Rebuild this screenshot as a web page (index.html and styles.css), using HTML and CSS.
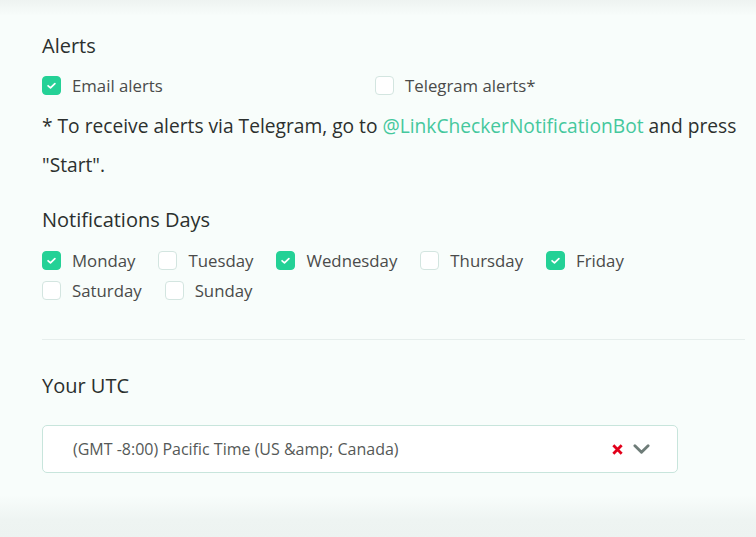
FILE: index.html
```html
<!DOCTYPE html>
<html lang="en">
<head>
<meta charset="utf-8">
<title>Notification settings</title>
<link rel="stylesheet" href="styles.css">
</head>
<body>
<main class="settings">
  <section class="group">
    <h2 class="title">Alerts</h2>
    <div class="alert-options">
      <label class="check"><span class="box on"><svg viewBox="0 0 20 20"><path d="M6 10.3l2.8 2.6 5.2-5.2"/></svg></span>Email alerts</label>
      <label class="check"><span class="box"></span>Telegram alerts*</label>
    </div>
    <p class="note"><span>* To receive alerts via Telegram, go to</span> <a class="link" href="#">@LinkCheckerNotificationBot</a> <span>and press</span> <span>"Start".</span></p>
  </section>

  <section class="group">
    <h2 class="title">Notifications Days</h2>
    <div class="days">
      <label class="check"><span class="box on"><svg viewBox="0 0 20 20"><path d="M6 10.3l2.8 2.6 5.2-5.2"/></svg></span>Monday</label>
      <label class="check"><span class="box"></span>Tuesday</label>
      <label class="check"><span class="box on"><svg viewBox="0 0 20 20"><path d="M6 10.3l2.8 2.6 5.2-5.2"/></svg></span>Wednesday</label>
      <label class="check"><span class="box"></span>Thursday</label>
      <label class="check"><span class="box on"><svg viewBox="0 0 20 20"><path d="M6 10.3l2.8 2.6 5.2-5.2"/></svg></span>Friday</label>
      <label class="check"><span class="box"></span>Saturday</label>
      <label class="check"><span class="box"></span>Sunday</label>
    </div>
  </section>

  <hr class="divider">

  <section class="group">
    <h2 class="title">Your UTC</h2>
    <div class="select">
      <span class="value">(GMT -8:00) Pacific Time (US &amp;amp; Canada)</span>
      <span class="controls">
        <svg class="clear" viewBox="0 0 14 14"><path d="M2.5 2.5l9 9M11.5 2.5l-9 9"/></svg>
        <svg class="arrow" viewBox="0 0 18 12"><path d="M2 2.5l7 7 7-7"/></svg>
      </span>
    </div>
  </section>
</main>
</body>
</html>
```

FILE: styles.css
```css
html, body {
  margin: 0;
  padding: 0;
}
body {
  width: 756px;
  height: 537px;
  overflow: hidden;
  font-family: "Open Sans", "Noto Sans", sans-serif;
  color: #2f3533;
  background:
    linear-gradient(to bottom, #eef3f1 0px, #f8fdfb 16px, #f8fdfb 495px, #eef4f2 520px, #edf3f1 537px);
}
.settings {
  padding: 34px 0 0 42px;
  width: 706px;
}
.title {
  margin: 0;
  font-size: 20px;
  line-height: 24px;
  font-weight: 400;
  color: #2b302e;
}
.alert-options {
  display: grid;
  grid-template-columns: 333px 1fr;
  margin-top: 17px;
}
.check {
  display: flex;
  align-items: center;
  gap: 11px;
  height: 20px;
  font-size: 16.8px;
  color: #4a4b4a;
  white-space: nowrap;
}
.box {
  width: 19px;
  height: 19px;
  box-sizing: border-box;
  border: 1.5px solid #d3e5e0;
  border-radius: 4px;
  background: #fff;
  display: flex;
  align-items: center;
  justify-content: center;
  flex: none;
}
.box.on {
  background: #24d196;
  border-color: #24d196;
}
.box svg {
  width: 19px;
  height: 19px;
  fill: none;
  stroke: #fff;
  stroke-width: 2;
  stroke-linecap: round;
  stroke-linejoin: round;
}
.note {
  margin: 11px 0 0;
  font-size: 19.2px;
  line-height: 39px;
  color: #2c302e;
  width: 706px;
}
.link {
  color: #45c89d;
  text-decoration: none;
}
.group + .group {
  margin-top: 24px;
}
.days {
  display: flex;
  flex-wrap: wrap;
  column-gap: 23px;
  row-gap: 10px;
  margin-top: 18px;
  width: 666px;
}
.divider {
  border: 0;
  border-top: 1px solid #e6eeec;
  margin: 39px 0 34px;
  width: 703px;
}
.divider + .group {
  margin-top: 0;
}
.select {
  margin-top: 27px;
  width: 636px;
  height: 48px;
  box-sizing: border-box;
  border: 1px solid #c8e5dc;
  border-radius: 5px;
  background: #fff;
  display: flex;
  align-items: center;
  justify-content: space-between;
  padding: 0 27px 0 30px;
}
.value {
  font-size: 16px;
  color: #555957;
}
.controls {
  display: flex;
  align-items: center;
  gap: 9px;
}
.clear {
  width: 13px;
  height: 13px;
  fill: none;
  stroke: #e2001a;
  stroke-width: 3;
}
.arrow {
  width: 17px;
  height: 12px;
  fill: none;
  stroke: #6e7c78;
  stroke-width: 3;
  stroke-linecap: round;
  stroke-linejoin: round;
}
```
